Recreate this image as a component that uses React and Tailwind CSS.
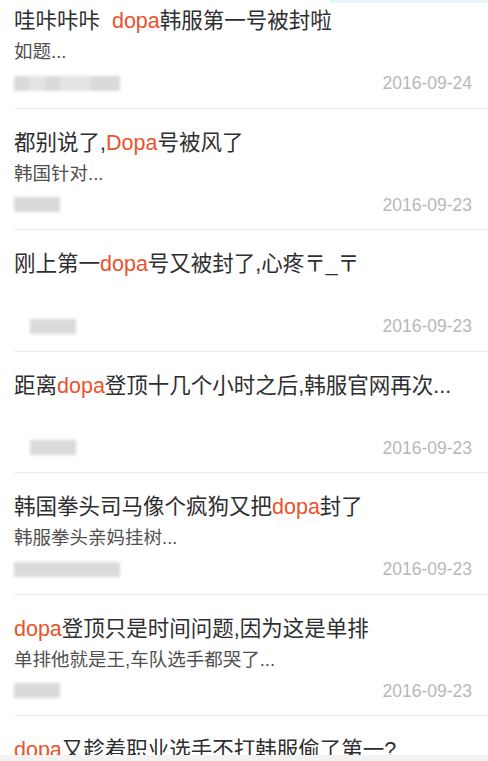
import React from "react";

const FONT = '"Liberation Sans", "Noto Sans CJK SC", sans-serif';

const posts = [
  { pre: "哇咔咔咔  ", hl: "dopa", post: "韩服第一号被封啦", sub: "如题...", date: "2016-09-24", blur: [15, 16, 15, 30, 30] },
  { pre: "都别说了,", hl: "Dopa", post: "号被风了", sub: "韩国针对...", date: "2016-09-23", blur: [46] },
  { pre: "刚上第一", hl: "dopa", post: "号又被封了,心疼〒_〒", sub: "", date: "2016-09-23", blur: [46], shift: true },
  { pre: "距离", hl: "dopa", post: "登顶十几个小时之后,韩服官网再次...", sub: "", date: "2016-09-23", blur: [46], shift: true },
  { pre: "韩国拳头司马像个疯狗又把", hl: "dopa", post: "封了", sub: "韩服拳头亲妈挂树...", date: "2016-09-23", blur: [106] },
  { pre: "", hl: "dopa", post: "登顶只是时间问题,因为这是单排", sub: "单排他就是王,车队选手都哭了...", date: "2016-09-23", blur: [46] },
  { pre: "", hl: "dopa", post: "又趁着职业选手不打韩服偷了第一?", sub: "", date: "", blur: [] },
];

function Blur({ widths, shift }) {
  return (
    <div className={`flex h-[15px] blur-[1.5px] ${shift ? "ml-[16px]" : ""}`}>
      {widths.map((w, i) => (
        <div
          key={i}
          className={i % 2 ? "bg-[#e4e4e4]" : "bg-[#dadada]"}
          style={{ width: w }}
        />
      ))}
    </div>
  );
}

function Row({ p }) {
  return (
    <div className="pt-[20px] pb-[12.5px] border-b border-[#ececec] ml-[13px]">
      <div className="text-[21.5px] leading-[28px] text-[#2e2e2e] whitespace-pre">
        {p.pre}
        <span className="text-[#e9532c]">{p.hl}</span>
        {p.post}
      </div>
      <div className="mt-[5px] h-[24px] text-[18.5px] leading-[24px] text-[#505050]">{p.sub}</div>
      <div className="mt-[7px] h-[24px] flex items-center justify-between pr-[16px]">
        <Blur widths={p.blur} shift={p.shift} />
        <span className="text-[17.5px] leading-[24px] text-[#b8b8b8]">{p.date}</span>
      </div>
    </div>
  );
}

export default function App() {
  return (
    <div className="relative w-[488px] h-[761px] overflow-hidden bg-white" style={{ fontFamily: FONT }}>
      <div className="absolute top-0 right-0 w-[158px] h-[3px] bg-[#e4f7fb]" />
      <div className="-mt-[13px] pl-[1px]">
        {posts.map((p, i) => (
          <Row key={i} p={p} />
        ))}
      </div>
      <div className="absolute left-0 right-0 bottom-0 h-[6px] bg-[#f2f2f2]" />
    </div>
  );
}
